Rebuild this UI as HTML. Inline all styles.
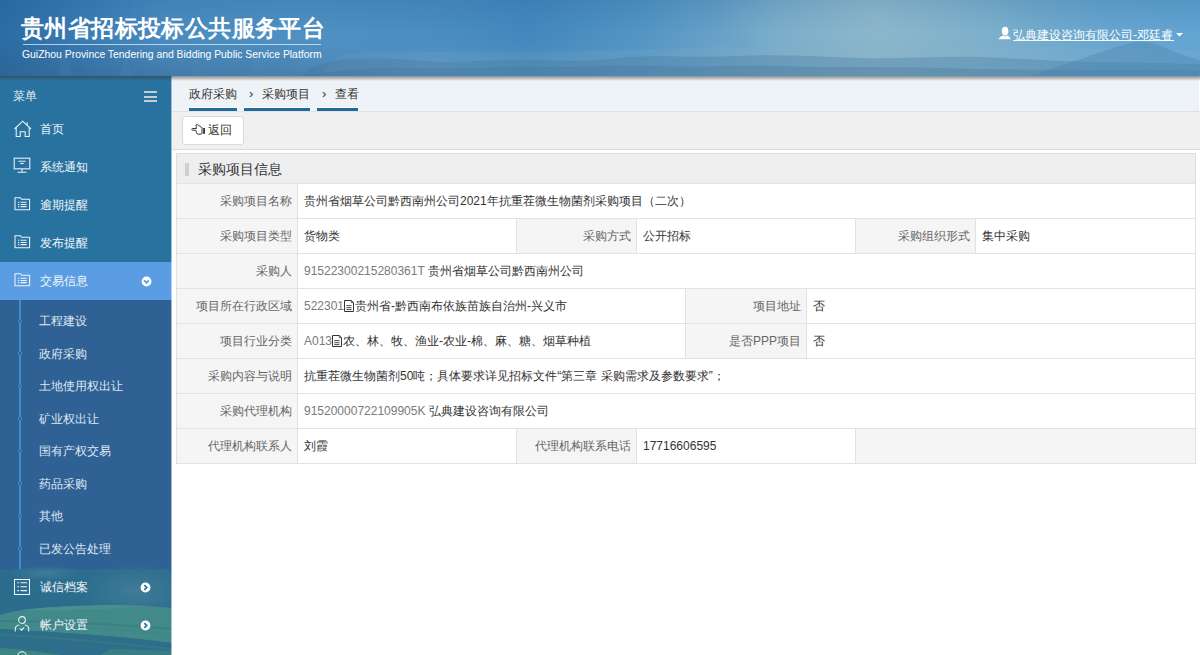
<!DOCTYPE html>
<html><head><meta charset="utf-8">
<style>
*{margin:0;padding:0;box-sizing:border-box}
html,body{width:1200px;height:655px;overflow:hidden;background:#fff;font-family:"Liberation Sans",sans-serif;font-size:12px;color:#333}
.a{position:absolute;white-space:nowrap}
#hdr{position:absolute;left:0;top:0;width:1200px;height:76px;overflow:hidden;z-index:3;
 background:linear-gradient(90deg,#2f72aa 0%,#3a7db6 20%,#4688bf 40%,#5894c3 55%,#79aac8 68%,#86b2c9 74%,#6fa5c8 86%,#5d9bcb 100%)}
#hsh{position:absolute;left:0;top:76px;width:1200px;height:5px;z-index:3;background:linear-gradient(180deg,rgba(60,60,60,.55),rgba(60,60,60,0))}
#title{left:21px;top:13.4px;font-size:23px;letter-spacing:0.4px;font-weight:bold;color:#fff}
#tline{left:23px;top:44px;width:298px;height:1px;background:rgba(215,232,242,.8)}
#sub{left:22px;top:48.6px;font-size:10.4px;color:#fff}
#user{left:1013px;top:27px;color:#fff;font-size:12px}
#uline{left:1013px;top:39.5px;width:161px;height:1px;background:#f4f8fb}
#side{position:absolute;left:0;top:76px;width:172px;height:579px;background:#2872a0;z-index:1;overflow:hidden;color:#fff}
.st{position:absolute;left:40px;height:16px;line-height:16px;color:#f2f6fa;white-space:nowrap}
.sv{position:absolute;overflow:visible}
#main{position:absolute;left:171px;top:76px;width:1029px;height:579px;background:transparent;overflow:hidden}
.cell{position:absolute;height:36px;border:1px solid #e2e2e2;line-height:34px;white-space:nowrap;overflow:hidden;color:#333;font-size:12px}
.lab{background:#f5f5f5;text-align:right;color:#666;padding-right:5px}
.val{background:#fff;padding-left:6px}
.dg{color:#7a7a7a}
</style></head><body>
<div id="hdr">
 <svg class="a" style="left:0;top:0" width="1200" height="76" viewBox="0 0 1200 76">
 <defs>
  <linearGradient id="hg" gradientUnits="userSpaceOnUse" x1="0" y1="0" x2="1200" y2="0">
   <stop offset="0" stop-color="#2c6ca2"/><stop offset="0.05" stop-color="#3577b0"/><stop offset="0.14" stop-color="#4a8cc0"/>
   <stop offset="0.25" stop-color="#4f91c3"/><stop offset="0.375" stop-color="#4a8dc1"/><stop offset="0.44" stop-color="#4388bd"/>
   <stop offset="0.54" stop-color="#5596c5"/><stop offset="0.65" stop-color="#78acca"/><stop offset="0.73" stop-color="#86b4ca"/>
   <stop offset="0.83" stop-color="#7aafcc"/><stop offset="0.92" stop-color="#68a7d0"/><stop offset="1" stop-color="#62a4d3"/>
  </linearGradient>
  <linearGradient id="vg" x1="0" y1="0" x2="0" y2="1">
   <stop offset="0" stop-color="#1f5a90" stop-opacity="0.2"/><stop offset="0.45" stop-color="#1f5a90" stop-opacity="0"/>
  </linearGradient>
  <linearGradient id="bhh" x1="0" y1="0" x2="1" y2="0">
   <stop offset="0" stop-color="#9bbccb" stop-opacity="0.05"/><stop offset="0.2" stop-color="#9bbccb" stop-opacity="0.12"/>
   <stop offset="0.3" stop-color="#8fb0c2" stop-opacity="0.22"/><stop offset="0.6" stop-color="#8fb0c2" stop-opacity="0.22"/><stop offset="1" stop-color="#8fb0c2" stop-opacity="0.15"/>
  </linearGradient>
  <linearGradient id="bhv" x1="0" y1="0" x2="0" y2="1">
   <stop offset="0" stop-color="#fff" stop-opacity="0"/><stop offset="1" stop-color="#fff" stop-opacity="1"/>
  </linearGradient>
  <linearGradient id="lbv" x1="0" y1="0" x2="0" y2="1">
   <stop offset="0" stop-color="#24568a" stop-opacity="0"/><stop offset="1" stop-color="#2a5a85" stop-opacity="0.45"/>
  </linearGradient>
  <linearGradient id="lbh" gradientUnits="userSpaceOnUse" x1="0" y1="0" x2="420" y2="0">
   <stop offset="0" stop-color="#fff" stop-opacity="1"/><stop offset="0.7" stop-color="#fff" stop-opacity="0.8"/><stop offset="1" stop-color="#fff" stop-opacity="0"/>
  </linearGradient>
  <mask id="lbm"><rect width="420" height="76" fill="url(#lbh)"/></mask>
  <mask id="bm"><rect y="36" width="1200" height="40" fill="url(#bhv)"/></mask>
  <radialGradient id="haze" cx="0.5" cy="0.5" r="0.5">
   <stop offset="0" stop-color="#a3c4d2" stop-opacity="0.3"/><stop offset="1" stop-color="#a3c4d2" stop-opacity="0"/>
  </radialGradient>
  <linearGradient id="mg" gradientUnits="userSpaceOnUse" x1="0" y1="0" x2="1200" y2="0">
   <stop offset="0" stop-color="#3d6f95" stop-opacity="0"/><stop offset="0.25" stop-color="#3d6f95" stop-opacity="0.2"/><stop offset="0.6" stop-color="#3d6f95" stop-opacity="0.18"/><stop offset="0.85" stop-color="#3d6f95" stop-opacity="0.08"/><stop offset="1" stop-color="#3d6f95" stop-opacity="0.05"/>
  </linearGradient>
 </defs>
 <rect width="1200" height="76" fill="url(#hg)"/>
 <rect width="1200" height="76" fill="url(#vg)"/>
 <ellipse cx="875" cy="15" rx="160" ry="50" fill="url(#haze)"/>
 <rect y="36" width="1200" height="40" fill="url(#bhh)" mask="url(#bm)"/>
 <rect y="40" width="420" height="36" fill="url(#lbv)" mask="url(#lbm)"/>
 <path d="M60 76 V58 L64 52 L68 60 L72 76 Z M120 76 L126 50 L132 76 Z M190 76 L195 55 L200 62 L206 76 Z M250 76 L256 52 L262 76 Z" fill="#5a8ab0" fill-opacity="0.18"/>
 <path d="M320 76 C330 60 340 54 360 53 C420 51 480 53 540 52 C600 51 660 49 720 47 C780 46 840 47 900 46 C960 45 1000 46 1040 48 C1080 50 1120 48 1200 50 V76 Z" fill="#9cbfd2" fill-opacity="0.1"/>
 <path d="M300 76 C310 66 330 60 350 59 C380 57 410 60 440 62 C470 62 500 59 540 60 C580 62 600 60 630 57 C660 55 700 58 740 56 C780 54 820 57 860 58 C900 59 940 56 980 57 C1020 58 1060 62 1100 62 C1140 62 1170 64 1200 64 V76 Z" fill="#3f749b" fill-opacity="0.3"/>
 <path d="M300 76 C340 70 380 66 420 68 C460 70 500 66 540 67 C580 68 620 64 660 66 C700 68 740 64 780 66 C820 68 880 66 940 68 C1000 70 1100 70 1200 70 V76 Z" fill="#3a6d92" fill-opacity="0.25"/>
 <path d="M1030 76 C1060 66 1100 52 1130 43 C1140 40 1150 41 1165 48 C1180 54 1192 58 1200 60 V76 Z" fill="#4a84ae" fill-opacity="0.4"/>
 </svg>
 <div id="title" class="a">贵州省招标投标公共服务平台</div>
 <div id="tline" class="a"></div>
 <div id="sub" class="a">GuiZhou Province Tendering and Bidding Public Service Platform</div>
 <svg class="a" style="left:998px;top:26px" width="13" height="14" viewBox="0 0 13 14"><ellipse cx="7.1" cy="5.1" rx="3.3" ry="4.4" fill="#fff"/><path d="M0.6 13.3 C1.2 11.2 3 10.1 5.4 9.4 L7.1 10.4 L8.8 9.4 C11.2 10.1 12.5 11.2 12.6 13.3 Z" fill="#fff"/></svg>
 <div id="user" class="a">弘典建设咨询有限公司-邓廷睿</div>
 <div id="uline" class="a"></div>
 <svg class="a" style="left:1176px;top:33px" width="7" height="4" viewBox="0 0 7 4"><path d="M0 0 L7 0 L3.5 3.5 Z" fill="#fff"/></svg>
</div>
<div id="hsh"></div>
<div id="side">
 <div class="st" style="left:13px;top:12px;color:#e4ecf3">菜单</div>
 <div class="a" style="left:144px;top:15.0px;width:13px;height:2.2px;background:#c3cdd6"></div>
 <div class="a" style="left:144px;top:19.5px;width:13px;height:2.2px;background:#c3cdd6"></div>
 <div class="a" style="left:144px;top:24.0px;width:13px;height:2.2px;background:#c3cdd6"></div>
 <div class="a" style="left:0;top:186px;width:172px;height:38px;background:#5b9de2"></div>
 <div class="a" style="left:0;top:224px;width:172px;height:269px;background:#2f6194"></div>
 <svg class="sv" style="left:0;top:493px" width="172" height="86" viewBox="0 0 171 86" preserveAspectRatio="none">
  <defs><radialGradient id="rp" cx="0.5" cy="0.5" r="0.5"><stop offset="0" stop-color="#5a95a8" stop-opacity="0.4"/><stop offset="1" stop-color="#5a95a8" stop-opacity="0"/></radialGradient></defs>
  <rect width="171" height="86" fill="#2c6c8d"/>
  <ellipse cx="135" cy="22" rx="55" ry="28" fill="url(#rp)"/>
  <ellipse cx="45" cy="4" rx="35" ry="8" fill="url(#rp)"/>
  <path d="M0 46 C10 43 20 41 30 40 C60 37 90 36 110 36 C140 36 160 38 171 39 V74 C140 70 110 67 80 65 C50 63 20 61 0 60 Z" fill="#42898a"/>
  <path d="M20 41 C60 37 100 35 150 37 C120 40 60 42 20 41 Z" fill="#4a9290" fill-opacity="0.8"/>
  <path d="M0 52 C50 52 110 55 171 60" stroke="#377d85" stroke-width="2" fill="none" stroke-opacity="0.7"/>
  <path d="M0 56 C50 56 110 60 171 66" stroke="#3e8588" stroke-width="1.5" fill="none" stroke-opacity="0.6"/>
  <path d="M0 60 C20 61 50 63 80 65 C110 67 140 70 171 74 V86 H0 Z" fill="#2f6e8b"/>
  <path d="M0 66 C40 67 90 72 171 80" stroke="#3a8084" stroke-width="2" fill="none" stroke-opacity="0.5"/>
  <path d="M0 79 C20 80 40 83 60 86 H0 Z" fill="#3c8481"/>
  <path d="M110 80 C130 80 150 81 171 82 V86 H100 Z" fill="#3a8282" fill-opacity="0.8"/>
 </svg>
 <div class="st" style="top:45px">首页</div>
 <div class="st" style="top:83px">系统通知</div>
 <div class="st" style="top:121px">逾期提醒</div>
 <div class="st" style="top:159px">发布提醒</div>
 <div class="st" style="top:197px">交易信息</div>
 <div class="st" style="top:503px">诚信档案</div>
 <div class="st" style="top:541px">帐户设置</div>
 <svg class="sv" style="left:13px;top:44px" width="20" height="18" viewBox="0 0 20 18" fill="none" stroke="#eef3f8" stroke-width="1.05"><path d="M1.5 9 L9.7 1.2 L18 9"/><path d="M3.2 7.5 V16.5 H7.2 V11.7 H12.2 V16.5 H16.2 V7.5"/><path d="M14.2 2.2 V5.2"/></svg>
 <svg class="sv" style="left:13px;top:81px" width="18" height="19" viewBox="0 0 18 19" fill="none" stroke="#eef3f8" stroke-width="1.05"><rect x="1.2" y="1.2" width="15.6" height="10.6"/><path d="M5.5 4.3 H12.5 M7.3 6.5 H10.7"/><path d="M9 12 V15.2 M4.5 15.2 H13.5"/></svg>
 <svg class="sv" style="left:13px;top:120px" width="19" height="16" viewBox="0 0 19 16" fill="none" stroke="#eef3f8" stroke-width="1.05"><path d="M2 1.8 H7.5 L8.5 3.2 H16.6 V13.8 H2 Z" stroke-linejoin="round"/><path d="M5 6.2 H6.3 M7.6 6.2 H13.6 M5 8.4 H6.3 M7.6 8.4 H13.6 M5 10.6 H6.3 M7.6 10.6 H13.6"/></svg>
 <svg class="sv" style="left:13px;top:158px" width="19" height="16" viewBox="0 0 19 16" fill="none" stroke="#eef3f8" stroke-width="1.05"><path d="M2 1.8 H7.5 L8.5 3.2 H16.6 V13.8 H2 Z" stroke-linejoin="round"/><path d="M5 6.2 H6.3 M7.6 6.2 H13.6 M5 8.4 H6.3 M7.6 8.4 H13.6 M5 10.6 H6.3 M7.6 10.6 H13.6"/></svg>
 <svg class="sv" style="left:13px;top:196px" width="19" height="16" viewBox="0 0 19 16" fill="none" stroke="#eef3f8" stroke-width="1.05"><path d="M2 1.8 H7.5 L8.5 3.2 H16.6 V13.8 H2 Z" stroke-linejoin="round"/><path d="M5 6.2 H6.3 M7.6 6.2 H13.6 M5 8.4 H6.3 M7.6 8.4 H13.6 M5 10.6 H6.3 M7.6 10.6 H13.6"/></svg>
 <svg class="sv" style="left:13px;top:502px" width="18" height="18" viewBox="0 0 18 18" fill="none" stroke="#eef3f8" stroke-width="1.05"><rect x="1.5" y="1.5" width="15" height="15"/><path d="M4.3 4.8 H6 M7.5 4.8 H14 M4.3 8.8 H6 M7.5 8.8 H14 M4.3 12.6 H6 M7.5 12.6 H14"/></svg>
 <svg class="sv" style="left:13px;top:539px" width="18" height="18" viewBox="0 0 18 18" fill="none" stroke="#eef3f8" stroke-width="1.05"><circle cx="9" cy="5" r="3.4"/><path d="M2.3 16.5 V14 C2.3 11.3 4.5 10.2 6.2 10 M11.8 10 C13.5 10.2 15.7 11.3 15.7 14 V16.5"/><path d="M7 13.6 L8.6 15.2 L11 12.6"/></svg>
 <svg class="sv" style="left:13px;top:575px" width="18" height="10" viewBox="0 0 18 10" fill="none" stroke="#eef3f8" stroke-width="1.05"><circle cx="9" cy="5" r="4.2"/></svg>
 <svg class="sv" style="left:140.9px;top:199.7px" width="11" height="11" viewBox="0 0 11 11"><circle cx="5.5" cy="5.5" r="4.9" fill="#fff"/><path d="M3.1 4.3 L5.5 6.7 L7.9 4.3" fill="none" stroke="#5b9de2" stroke-width="1.7"/></svg>
 <svg class="sv" style="left:140.4px;top:506.2px" width="11" height="11" viewBox="0 0 11 11"><circle cx="5.5" cy="5.5" r="4.9" fill="#fff"/><path d="M4.3 3.1 L6.7 5.5 L4.3 7.9" fill="none" stroke="#2d7190" stroke-width="1.7"/></svg>
 <svg class="sv" style="left:140.4px;top:544.2px" width="11" height="11" viewBox="0 0 11 11"><circle cx="5.5" cy="5.5" r="4.9" fill="#fff"/><path d="M4.3 3.1 L6.7 5.5 L4.3 7.9" fill="none" stroke="#2d7190" stroke-width="1.7"/></svg>
 <div class="a" style="left:19px;top:224px;width:2px;height:269px;background:#3b8fd3"></div>
 <div class="st" style="left:39.3px;top:237.0px;color:#dfe8f1">工程建设</div>
 <div class="a" style="left:17.6px;top:242.6px;width:4.8px;height:4.8px;border-radius:50%;border:1.2px solid #3b8fd3;background:#2f6194"></div>
 <div class="st" style="left:39.3px;top:269.5px;color:#dfe8f1">政府采购</div>
 <div class="a" style="left:17.6px;top:275.1px;width:4.8px;height:4.8px;border-radius:50%;border:1.2px solid #3b8fd3;background:#2f6194"></div>
 <div class="st" style="left:39.3px;top:302.0px;color:#dfe8f1">土地使用权出让</div>
 <div class="a" style="left:17.6px;top:307.6px;width:4.8px;height:4.8px;border-radius:50%;border:1.2px solid #3b8fd3;background:#2f6194"></div>
 <div class="st" style="left:39.3px;top:334.5px;color:#dfe8f1">矿业权出让</div>
 <div class="a" style="left:17.6px;top:340.1px;width:4.8px;height:4.8px;border-radius:50%;border:1.2px solid #3b8fd3;background:#2f6194"></div>
 <div class="st" style="left:39.3px;top:367.0px;color:#dfe8f1">国有产权交易</div>
 <div class="a" style="left:17.6px;top:372.6px;width:4.8px;height:4.8px;border-radius:50%;border:1.2px solid #3b8fd3;background:#2f6194"></div>
 <div class="st" style="left:39.3px;top:399.5px;color:#dfe8f1">药品采购</div>
 <div class="a" style="left:17.6px;top:405.1px;width:4.8px;height:4.8px;border-radius:50%;border:1.2px solid #3b8fd3;background:#2f6194"></div>
 <div class="st" style="left:39.3px;top:432.0px;color:#dfe8f1">其他</div>
 <div class="a" style="left:17.6px;top:437.6px;width:4.8px;height:4.8px;border-radius:50%;border:1.2px solid #3b8fd3;background:#2f6194"></div>
 <div class="st" style="left:39.3px;top:464.5px;color:#dfe8f1">已发公告处理</div>
 <div class="a" style="left:17.6px;top:470.1px;width:4.8px;height:4.8px;border-radius:50%;border:1.2px solid #3b8fd3;background:#2f6194"></div>
 <div class="a" style="left:171px;top:0;width:1px;height:579px;background:rgba(255,255,255,.55)"></div>
</div>
<div id="main">
 <div class="a" style="left:1px;top:0;width:1027px;height:35px;background:#eef3f7;border-radius:0 0 4px 0;box-shadow:0 1px 1px #dcdfe2"></div>
 <div class="a" style="left:0;top:35px;width:1029px;height:39px;background:#f0f0f0;border-bottom:1px solid #dcdcdc;border-top:1px solid #e3e3e3"></div>
 <div class="a" style="left:18px;top:31px;width:48px;height:1px;background:#fff"></div>
 <div class="a" style="left:18px;top:32px;width:48px;height:3px;background:#236a9c"></div>
 <div class="a" style="left:18px;top:10px;line-height:16px;color:#333">政府采购</div>
 <div class="a" style="left:73px;top:31px;width:66px;height:1px;background:#fff"></div>
 <div class="a" style="left:73px;top:32px;width:66px;height:3px;background:#236a9c"></div>
 <div class="a" style="left:73px;top:10px;line-height:16px;color:#333"><span style="display:inline-block;width:18px;padding-left:5px;font-size:13px">›</span>采购项目</div>
 <div class="a" style="left:146px;top:31px;width:41px;height:1px;background:#fff"></div>
 <div class="a" style="left:146px;top:32px;width:41px;height:3px;background:#236a9c"></div>
 <div class="a" style="left:146px;top:10px;line-height:16px;color:#333"><span style="display:inline-block;width:18px;padding-left:5px;font-size:13px">›</span>查看</div>
 <div class="a" style="left:11px;top:40px;width:62px;height:29px;background:#fff;border:1px solid #dadada;border-radius:3px"></div>
 <svg class="a" style="left:19px;top:46px" width="16" height="14" viewBox="0 0 16 14" fill="none" stroke="#3a3a3a" stroke-width="1"><path d="M2.4 6.5 H6.4 L6 3 C6.2 2.3 6.9 2.2 7.4 2.6 L12 5.7 V11.4 C12 11.9 11.6 12.1 11.1 12.1 H8.1 C7.2 12.1 6.8 11.6 6.5 10.8 L5.8 8.2 H2.4 C1.6 8.2 1.6 6.5 2.4 6.5 Z" stroke-linejoin="round"/><rect x="13.2" y="6" width="1.7" height="5.8" fill="#222" stroke="none"/></svg>
 <div class="a" style="left:37px;top:46px;line-height:16px;color:#333">返回</div>
 <div class="a" style="left:5px;top:77px;width:1020px;height:31px;background:#eeeeee;border:1px solid #dedede"></div>
 <div class="a" style="left:14px;top:87px;width:4px;height:13px;background:#cfcfcf"></div>
 <div class="a" style="left:27px;top:84px;line-height:18px;font-size:14px;color:#333">采购项目信息</div>
 <div class="cell lab" style="left:5px;top:107px;width:122px">采购项目名称</div>
 <div class="cell val" style="left:126px;top:107px;width:899px">贵州省烟草公司黔西南州公司2021年抗重茬微生物菌剂采购项目（二次）</div>
 <div class="cell lab" style="left:5px;top:142px;width:122px">采购项目类型</div>
 <div class="cell val" style="left:126px;top:142px;width:220px">货物类</div>
 <div class="cell lab" style="left:345px;top:142px;width:121px">采购方式</div>
 <div class="cell val" style="left:465px;top:142px;width:220px">公开招标</div>
 <div class="cell lab" style="left:684px;top:142px;width:121px">采购组织形式</div>
 <div class="cell val" style="left:804px;top:142px;width:221px">集中采购</div>
 <div class="cell lab" style="left:5px;top:177px;width:122px">采购人</div>
 <div class="cell val" style="left:126px;top:177px;width:899px"><span class="dg">91522300215280361T</span> 贵州省烟草公司黔西南州公司</div>
 <div class="cell lab" style="left:5px;top:212px;width:122px">项目所在行政区域</div>
 <div class="cell val" style="left:126px;top:212px;width:389px"><span class="dg">522301</span><span style="display:inline-block;width:11px;height:12px;vertical-align:-2px;position:relative"><svg width="11" height="12" viewBox="0 0 11 12" fill="none" stroke="#333" stroke-width="1"><path d="M0.5 0.5 H7.3 L9.5 2.7 V11.5 H0.5 Z"/><path d="M7.3 0.5 V2.7 H9.5" stroke-width="0.8"/><path d="M2.3 5.6 H7.5 M2.3 7.7 H7.5 M2.3 9.6 H7.5" stroke-width="0.9"/></svg></span>贵州省-黔西南布依族苗族自治州-兴义市</div>
 <div class="cell lab" style="left:514px;top:212px;width:122px">项目地址</div>
 <div class="cell val" style="left:635px;top:212px;width:390px">否</div>
 <div class="cell lab" style="left:5px;top:247px;width:122px">项目行业分类</div>
 <div class="cell val" style="left:126px;top:247px;width:389px"><span class="dg">A013</span><span style="display:inline-block;width:11px;height:12px;vertical-align:-2px;position:relative"><svg width="11" height="12" viewBox="0 0 11 12" fill="none" stroke="#333" stroke-width="1"><path d="M0.5 0.5 H7.3 L9.5 2.7 V11.5 H0.5 Z"/><path d="M7.3 0.5 V2.7 H9.5" stroke-width="0.8"/><path d="M2.3 5.6 H7.5 M2.3 7.7 H7.5 M2.3 9.6 H7.5" stroke-width="0.9"/></svg></span>农、林、牧、渔业-农业-棉、麻、糖、烟草种植</div>
 <div class="cell lab" style="left:514px;top:247px;width:122px">是否PPP项目</div>
 <div class="cell val" style="left:635px;top:247px;width:390px">否</div>
 <div class="cell lab" style="left:5px;top:282px;width:122px">采购内容与说明</div>
 <div class="cell val" style="left:126px;top:282px;width:899px">抗重茬微生物菌剂50吨；具体要求详见招标文件“第三章 采购需求及参数要求”；</div>
 <div class="cell lab" style="left:5px;top:317px;width:122px">采购代理机构</div>
 <div class="cell val" style="left:126px;top:317px;width:899px"><span class="dg">91520000722109905K</span> 弘典建设咨询有限公司</div>
 <div class="cell lab" style="left:5px;top:352px;width:122px">代理机构联系人</div>
 <div class="cell val" style="left:126px;top:352px;width:220px">刘霞</div>
 <div class="cell lab" style="left:345px;top:352px;width:121px">代理机构联系电话</div>
 <div class="cell val" style="left:465px;top:352px;width:220px">17716606595</div>
 <div class="cell lab" style="left:684px;top:352px;width:341px"></div>
</div>
</body></html>
